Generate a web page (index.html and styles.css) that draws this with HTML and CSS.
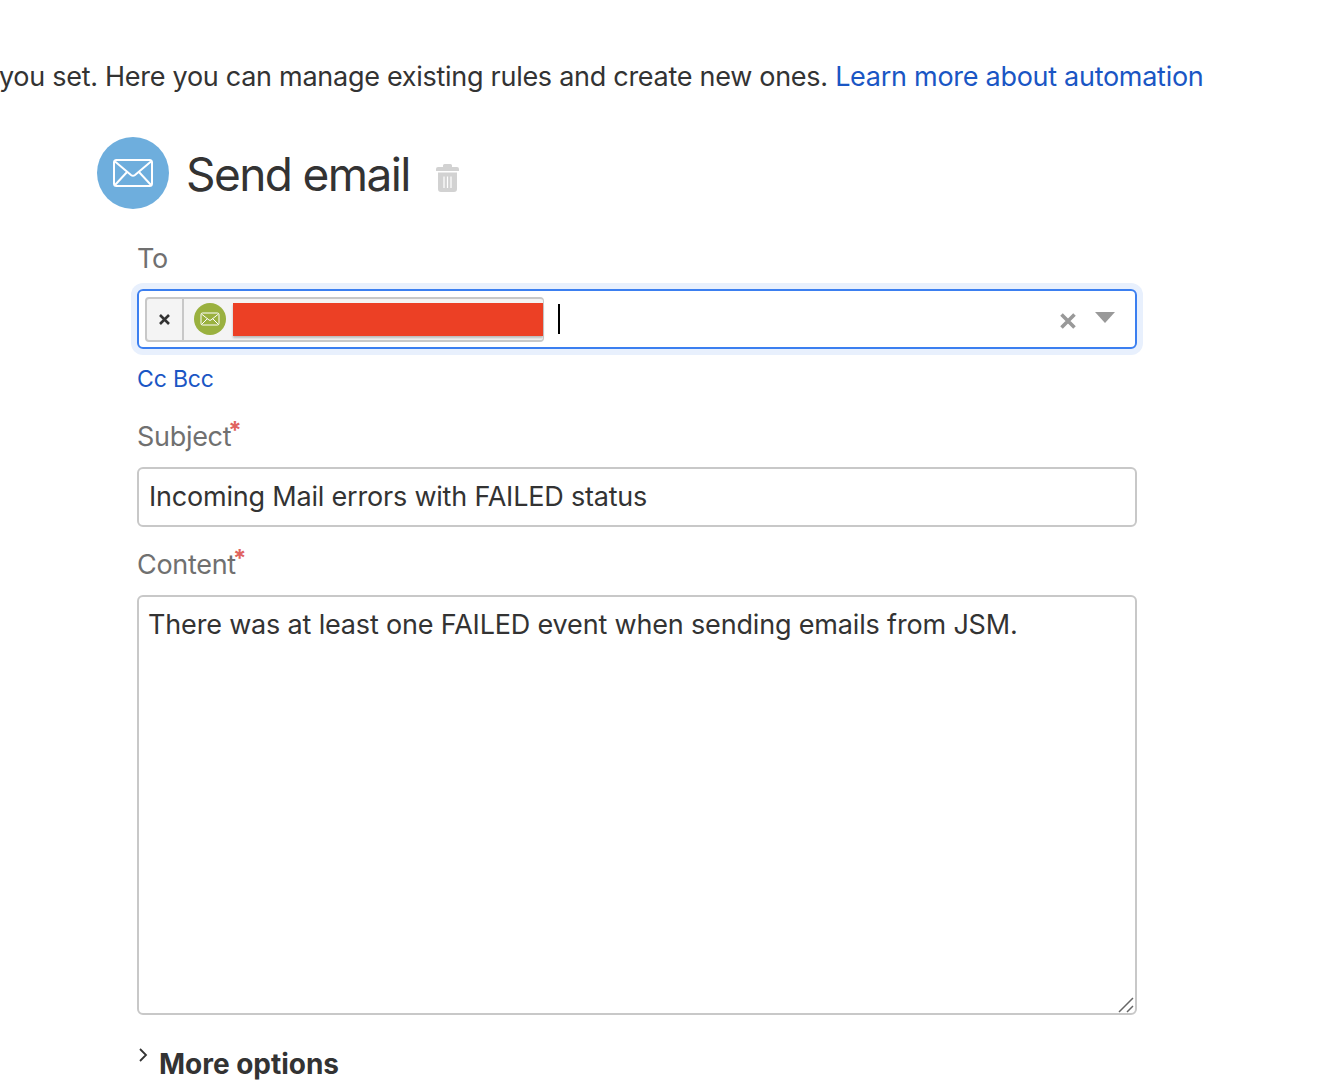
FILE: index.html
```html
<!doctype html>
<html>
<head>
  <title>Send email | Automation</title>
  <meta charset='UTF-8'>
  <link rel="stylesheet" href="styles.css">
</head>
<body>
  <main>
    <p class="intro">you set. Here you can manage existing rules and create new ones. <a href="#">Learn more about automation</a></p>
    <header class="action-head">
      <span class="action-icon">
        <svg width="42" height="30" viewBox="0 0 42 30" fill="none" stroke="#fff" stroke-width="2">
          <rect x="2" y="2" width="38" height="26" rx="2.5"/>
          <path d="M3 3.500 19 17q2 1.600 4 0L39 3.500M3 27 15.500 13.500M39 27 26.500 13.500"/>
        </svg>
      </span>
      <h1>Send email</h1>
      <svg class="trash" width="23" height="28" viewBox="0 0 23 28">
        <path fill="#d2d2d2" d="M8.500 0h6Q16 0 16 1.500V3h5q2 0 2 2v2H0V5q0-2 2-2h5V1.500Q7 0 8.500 0zM2 8.500h19V25q0 3-3 3H5q-3 0-3-3z"/>
        <path stroke="#fff" stroke-width="1.200" d="M8 12.500V24M11.500 12.500V24M15 12.500V24"/>
      </svg>
    </header>
    <form class="action-form">
      <label class="field-label">To</label>
      <div class="to-field">
        <span class="chip">
          <span class="chip-remove">
            <svg width="11" height="11" viewBox="0 0 11 11"><path stroke="#333" stroke-width="2.600" d="M1 1 10 10M10 1 1 10"/></svg>
          </span>
          <span class="chip-body">
            <span class="chip-icon">
              <svg width="20" height="14" viewBox="0 0 20 14" fill="none" stroke="#fff" stroke-width="1">
                <rect x="1" y="1" width="18" height="12" rx="1.500"/>
                <path d="M1.500 2 9 8q1 .8 2 0l7.500-6M1.500 12.500 7.500 6.500M18.500 12.500 12.500 6.500"/>
              </svg>
            </span>
            <span class="redaction"></span>
          </span>
        </span>
        <span class="caret"></span>
        <span class="to-controls">
          <svg class="to-clear" width="18" height="18" viewBox="0 0 18 18"><path stroke="#999" stroke-width="3.600" d="M2.500 2.500 15.500 15.500M15.500 2.500 2.500 15.500"/></svg>
          <svg class="to-arrow" width="20" height="11" viewBox="0 0 20 11"><path fill="#999" d="M0 0h20L10 11z"/></svg>
        </span>
      </div>
      <div class="cc-links"><a href="#">Cc</a> <a href="#">Bcc</a></div>
      <label class="field-label">Subject<span class="req">*</span></label>
      <input class="text-input" type="text" value="Incoming Mail errors with FAILED status">
      <label class="field-label">Content<span class="req">*</span></label>
      <div class="content-wrap">
        <textarea class="text-input content-input">There was at least one FAILED event when sending emails from JSM.</textarea>
        <svg class="grip" width="16" height="16" viewBox="0 0 16 16" fill="none" stroke="#666" stroke-width="1.500"><path d="M1 15 15 1M9 15l6-6"/></svg>
      </div>
      <div class="more-options">
        <svg width="12" height="16" viewBox="0 0 12 16" fill="none" stroke="#333" stroke-width="1.800"><path d="M3 2l6 6-6 6"/></svg>
        <span>More options</span>
      </div>
    </form>
  </main>
</body>
</html>
```

FILE: styles.css
```css
html, body {
  height: 100%;
  overflow: hidden }
body {
  margin: 0;
  color: #333;
  background: #fff;
  font-family: Inter, 'Liberation Sans', sans-serif }
a {
  color: #1a56c4;
  text-decoration: none }
.intro {
  margin: 0 0 0 -1px;
  padding-top: 60px;
  font-size: 27px;
  letter-spacing: -.28px;
  line-height: 34px;
  white-space: nowrap }
.action-head {
  display: flex;
  align-items: center;
  margin: 43px 0 0 97px;
  height: 72px }
  .action-icon {
    width: 72px;
    height: 72px;
    border-radius: 50%;
    background: #6eaedd;
    display: flex;
    align-items: center;
    justify-content: center }
  h1 {
    font-size: 46px;
    font-weight: 400;
    letter-spacing: -1.6px;
    margin: 2px 0 0 17px }
  .trash { margin: 10px 0 0 26px }
.action-form {
  margin: 33px 0 0 137px;
  width: 1000px;
  display: flex;
  flex-flow: column;
  align-items: flex-start }
.field-label {
  color: #707070;
  font-size: 27px;
  letter-spacing: -.3px;
  line-height: 34px;
  margin-bottom: 13px;
  position: relative }
  .req {
    color: #e0645f;
    font-size: 24px;
    font-weight: 700;
    margin-left: -3px;
    position: absolute;
    top: -6px }
.to-field {
  box-sizing: border-box;
  width: 1000px;
  height: 60px;
  border: 2px solid #3b7ff0;
  border-radius: 6px;
  box-shadow: 0 0 0 6px #e8f0fd;
  display: flex;
  align-items: center;
  padding: 0 20px 0 6px }
  .chip {
    display: flex;
    height: 45px;
    box-sizing: border-box;
    border: 2px solid #c8c8c8;
    border-right-width: 1px;
    border-radius: 4px;
    background: #f4f4f4 }
    .chip-remove {
      width: 35px;
      display: flex;
      align-items: center;
      justify-content: center;
      border-right: 2px solid #c8c8c8 }
    .chip-body {
      display: flex;
      align-items: center;
      padding-left: 10px }
    .chip-icon {
      width: 32px;
      height: 32px;
      border-radius: 50%;
      background: #9ab13f;
      display: flex;
      align-items: center;
      justify-content: center;
      margin-right: 7px }
    .redaction {
      width: 310px;
      height: 33px;
      background: #ec4025;
      box-shadow: 0 2px 2px #bbb;
      margin-top: 1px }
  .caret {
    width: 2px;
    height: 30px;
    background: #000;
    margin-left: 14px }
  .to-controls {
    margin-left: auto;
    display: flex;
    align-items: center;
    gap: 18px }
    .to-clear { margin-top: 4px }
    .to-arrow { margin-top: -4px }
.cc-links {
  font-size: 23px;
  letter-spacing: -.15px;
  line-height: 30px;
  margin: 15px 0 26px }
.text-input {
  box-sizing: border-box;
  width: 1000px;
  height: 60px;
  border: 2px solid #c8c8c8;
  border-radius: 6px;
  padding: 0 10px 2px;
  margin: 0 0 21px;
  color: #333;
  font: 27px/34px Inter, 'Liberation Sans', sans-serif;
  letter-spacing: -.2px;
  outline: none }
.content-wrap { position: relative }
.content-input {
  height: 420px;
  padding: 11px 10px 0 9px;
  display: block;
  margin: 0;
  letter-spacing: -.17px;
  resize: none }
.grip {
  position: absolute;
  right: 3px;
  bottom: 2px }
.more-options {
  display: flex;
  align-items: flex-start;
  gap: 10px;
  margin-top: 32px;
  font-size: 28px;
  font-weight: 700;
  letter-spacing: -.02px;
  line-height: 34px }
```
